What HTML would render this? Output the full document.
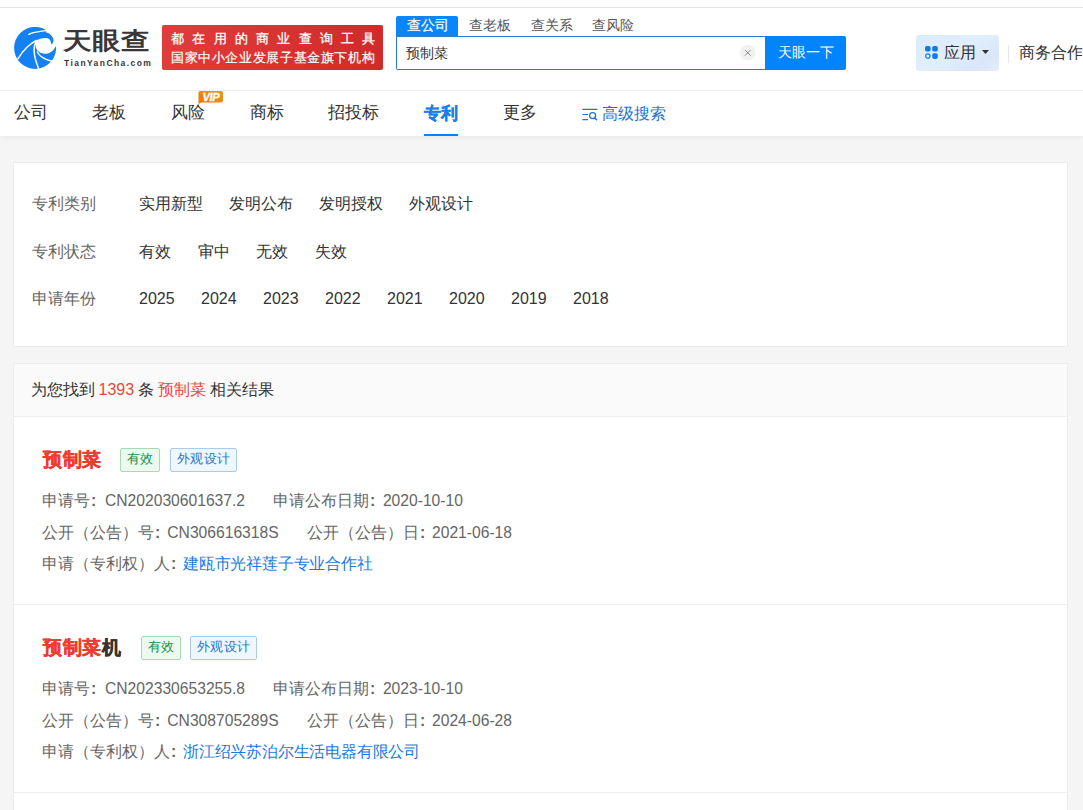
<!DOCTYPE html>
<html><head><meta charset="utf-8">
<style>
*{margin:0;padding:0;box-sizing:border-box}
html,body{text-spacing-trim:space-all;width:1083px;height:810px;overflow:hidden;background:#f5f5f5;font-family:"Liberation Sans",sans-serif;color:#333}
.abs{position:absolute;white-space:nowrap}
#top{position:absolute;left:0;top:0;width:1083px;height:91px;background:#fff;border-top:7px solid #fff}
#topline{position:absolute;left:0;top:7px;width:1083px;height:1px;background:#e3e3e3}
#navline{position:absolute;left:0;top:90px;width:1083px;height:1px;background:#f2f2f2}
#nav{position:absolute;left:0;top:91px;width:1083px;height:45px;background:#fff;box-shadow:0 2px 5px rgba(0,0,0,0.05)}
.nv{position:absolute;top:0;font-size:17px;line-height:44px;color:#333}
.card{position:absolute;left:13px;width:1055px;background:#fff;border:1px solid #ececec}
.lbl{position:absolute;font-size:16px;color:#666;line-height:20px}
.opt{position:absolute;font-size:16px;color:#333;line-height:20px}
.item{position:absolute;left:0;width:1053px;height:188px;border-bottom:1px solid #eeeeee}
.ttl{position:absolute;left:29px;top:29px;font-size:19px;font-weight:bold;-webkit-text-stroke:0.35px currentColor;line-height:28px;color:#333;white-space:nowrap;letter-spacing:0.6px}
.hl{color:#ee3b30}
.tag{position:absolute;top:31px;height:24px;font-size:13px;line-height:20px;letter-spacing:0.5px;text-indent:0.5px;border-radius:2px;white-space:nowrap;text-align:center}
.tag.g{width:40px;color:#16904c;background:#ebf9ef;border:1px solid #a9d9b6}
.tag.b{width:67px;color:#2776c8;background:#eef6fe;border:1px solid #abcbeb}
.ln{position:absolute;left:28px;font-size:16px;line-height:20px;color:#666;white-space:nowrap}
.lk{color:#1a7ae0;letter-spacing:-0.2px}
.c{display:inline-block;width:16px;padding-left:1px;font-weight:bold}
.val{position:absolute;font-size:15.65px;line-height:20px;color:#666;white-space:nowrap}
</style></head><body>
<div id="top"></div>
<div id="topline"></div>

<!-- logo -->
<svg class="abs" style="left:14px;top:27px" width="42" height="42" viewBox="14 27 42 42">
  <circle cx="35.1" cy="47.9" r="21" fill="#1480f3"/>
  <path fill="#fff" d="M36.1 40.7 C40 38 45 37.5 48 38.5 C50 39.3 51.2 41.5 51.3 44.4 C53 43.5 54 41.5 53.2 38.5 C52 35 49 32.8 45.8 32.2 L46.7 30.5 L50 26 L60 26 L60 47 L55.4 46.7 C54 50 50 53.6 46.5 53.7 C43 53.9 40 53 37.6 50.7 C35.6 48.5 34.8 45 36.1 40.7 Z"/>
  <path fill="none" stroke="#fff" stroke-width="1.3" d="M28.3 34.6 C31 33 34 32.2 37.2 31.9 C41 31.3 44 30.8 47.5 30.7"/>
  <path fill="none" stroke="#fff" stroke-width="1.5" d="M17.5 59.5 C20 55 24 50 27 47.2 C30 44.3 33 42 36.8 40.2"/>
  <path fill="none" stroke="#fff" stroke-width="1.5" d="M35.9 41.5 C34.3 45 33.8 50 34.4 54 C35 59 36.8 64 38.8 69"/>
  <path fill="none" stroke="#fff" stroke-width="1.5" d="M37 51.5 C39 55 42 57.5 45 58.8 C47 59.8 49 60.5 52 61.2"/>
</svg>
<div class="abs" style="left:63px;top:25px;font-size:29px;font-weight:bold;color:#3a3637;line-height:38px;letter-spacing:0.2px;transform:scaleY(0.84);transform-origin:0 0">天眼查</div>
<div class="abs" style="left:64px;top:57px;font-size:8.5px;font-weight:bold;color:#3a3637;line-height:12px;letter-spacing:1.42px">TianYanCha.com</div>

<!-- red banner -->
<div class="abs" style="left:162px;top:25px;width:221px;height:45px;border-radius:2px;background:linear-gradient(90deg,#e23b3b,#d02a2a)"></div>
<div class="abs" style="left:171px;top:30px;font-size:13px;line-height:18px;color:#fff;letter-spacing:8.25px;font-weight:500;-webkit-text-stroke:0.3px #fff">都在用的商业查询工具</div>
<div class="abs" style="left:171px;top:49px;font-size:13px;line-height:18px;color:#fff;letter-spacing:0.62px;font-weight:500;-webkit-text-stroke:0.2px #fff">国家中小企业发展子基金旗下机构</div>

<!-- search -->
<div class="abs" style="left:396px;top:16px;width:62px;height:21px;background:#0786fd;border-radius:2px 2px 0 0"></div>
<div class="abs" style="left:407px;top:15px;font-size:14px;line-height:20px;color:#fff;-webkit-text-stroke:0.2px #fff">查公司</div>
<div class="abs" style="left:469px;top:15px;font-size:14px;line-height:20px;color:#555">查老板</div>
<div class="abs" style="left:531px;top:15px;font-size:14px;line-height:20px;color:#555">查关系</div>
<div class="abs" style="left:592px;top:15px;font-size:14px;line-height:20px;color:#555">查风险</div>
<div class="abs" style="left:396px;top:36px;width:370px;height:34px;border:1px solid #2b79c9;border-right:none;border-radius:0 0 0 2px;background:#fff"></div>
<div class="abs" style="left:406px;top:43px;font-size:14px;line-height:20px;color:#333">预制菜</div>
<svg class="abs" style="left:739px;top:44px" width="18" height="18" viewBox="739 44 18 18"><circle cx="747.8" cy="52.8" r="7.8" fill="#f1f1f1"/><path d="M745 50 L750.6 55.6 M750.6 50 L745 55.6" stroke="#8c8c8c" stroke-width="1"/></svg>
<div class="abs" style="left:765px;top:36px;width:81px;height:34px;background:#0084ff;border-radius:0 2px 2px 0;color:#fff;font-size:14px;line-height:32px;text-align:center">天眼一下</div>

<!-- app button -->
<div class="abs" style="left:916px;top:35px;width:83px;height:36px;border-radius:3px;background:linear-gradient(150deg,#dbeafd 0%,#e1eefd 50%,#d9e6f8 78%,#e4eefb 100%)"></div>
<svg class="abs" style="left:925px;top:46px" width="13" height="13" viewBox="0 0 13 13">
  <rect x="0" y="0" width="5.6" height="5.6" rx="1.8" fill="#0a7cf0"/>
  <rect x="7.2" y="0" width="5.6" height="5.6" rx="1.8" fill="#0a7cf0"/>
  <circle cx="2.8" cy="10.1" r="2.2" fill="none" stroke="#0a7cf0" stroke-width="1.2"/>
  <rect x="7.2" y="7.3" width="5.6" height="5.6" rx="1.8" fill="#0a7cf0"/>
</svg>
<div class="abs" style="left:944px;top:43px;font-size:16px;line-height:20px;color:#333">应用</div>
<svg class="abs" style="left:981.5px;top:50px" width="7" height="4" viewBox="0 0 7 4"><path d="M0 0 L7 0 L3.5 4 Z" fill="#333"/></svg>
<div class="abs" style="left:1008px;top:45px;width:1px;height:18px;background:#e6e6e6"></div>
<div class="abs" style="left:1019px;top:43px;font-size:16px;line-height:20px;color:#333">商务合作</div>

<div id="navline"></div>
<div id="nav">
  <div class="nv" style="left:14px">公司</div>
  <div class="nv" style="left:92px">老板</div>
  <div class="nv" style="left:171px">风险</div>
  <div class="nv" style="left:250px">商标</div>
  <div class="nv" style="left:328px">招投标</div>
  <div class="nv" style="left:424px;color:#1a7fe6;font-weight:bold;-webkit-text-stroke:0.35px #1a7fe6;top:0.5px">专利</div>
  <div class="abs" style="left:424px;top:43px;width:34px;height:2px;background:#0084ff"></div>
  <div class="nv" style="left:503px">更多</div>
  <svg class="abs" style="left:578px;top:13px" width="24" height="20" viewBox="578 104 24 20">
    <path d="M582.8 109.3 H596.9" stroke="#1f74d0" stroke-width="1.3" stroke-linecap="round"/>
    <path d="M582.8 114.5 H587.4" stroke="#1f74d0" stroke-width="1.2" stroke-linecap="round"/>
    <path d="M582.8 119.6 H587.6" stroke="#1f74d0" stroke-width="1.3" stroke-linecap="round"/>
    <circle cx="592.6" cy="115.6" r="3" fill="none" stroke="#1f74d0" stroke-width="1.3"/>
    <path d="M594.9 118 L596.7 119.8" stroke="#1f74d0" stroke-width="1.4" stroke-linecap="round"/>
  </svg>
  <div class="nv" style="left:602px;color:#1e72d0;font-size:16px;top:0.5px">高级搜索</div>
</div>
<!-- VIP badge -->
<svg class="abs" style="left:197px;top:90px" width="28" height="15" viewBox="197 90 28 15">
  <defs><linearGradient id="vg" x1="0" y1="1" x2="1" y2="0"><stop offset="0" stop-color="#f07408"/><stop offset="1" stop-color="#e89a28"/></linearGradient></defs>
  <path d="M200.5 91 H221 Q223 91 223 93 V100.6 Q223 102.6 221 102.6 H201.5 L198.6 103.9 L198.4 93 Q198.4 91 200.5 91 Z" fill="url(#vg)"/>
  <text x="211" y="100.6" text-anchor="middle" font-family="Liberation Sans" font-size="11" font-weight="bold" font-style="italic" fill="#fff" stroke="#fff" stroke-width="0.3" letter-spacing="-0.3">VIP</text>
</svg>

<!-- filter card -->
<div class="card" style="top:162px;height:185px">
  <div class="lbl" style="left:18px;top:31px">专利类别</div>
  <div class="opt" style="left:125px;top:31px">实用新型</div>
  <div class="opt" style="left:215px;top:31px">发明公布</div>
  <div class="opt" style="left:305px;top:31px">发明授权</div>
  <div class="opt" style="left:395px;top:31px">外观设计</div>

  <div class="lbl" style="left:18px;top:79px">专利状态</div>
  <div class="opt" style="left:125px;top:79px">有效</div>
  <div class="opt" style="left:184px;top:79px">审中</div>
  <div class="opt" style="left:242px;top:79px">无效</div>
  <div class="opt" style="left:301px;top:79px">失效</div>

  <div class="lbl" style="left:18px;top:126px">申请年份</div>
  <div class="opt" style="left:125px;top:126px">2025</div>
  <div class="opt" style="left:187px;top:126px">2024</div>
  <div class="opt" style="left:249px;top:126px">2023</div>
  <div class="opt" style="left:311px;top:126px">2022</div>
  <div class="opt" style="left:373px;top:126px">2021</div>
  <div class="opt" style="left:435px;top:126px">2020</div>
  <div class="opt" style="left:497px;top:126px">2019</div>
  <div class="opt" style="left:559px;top:126px">2018</div>
</div>

<!-- results card -->
<div class="card" style="top:363px;height:460px">
  <div style="position:absolute;left:0;top:0;width:1053px;height:53px;background:#fafafa;border-bottom:1px solid #eeeeee"></div>
  <div class="abs" style="left:17px;top:16px;font-size:16px;line-height:20px;color:#333">为您找到</div><div class="abs" style="left:84.5px;top:16px;font-size:16px;line-height:20px;color:#e5493d">1393</div><div class="abs" style="left:124px;top:16px;font-size:16px;line-height:20px;color:#333">条</div><div class="abs" style="left:144px;top:16px;font-size:16px;line-height:20px;color:#e5493d">预制菜</div><div class="abs" style="left:196px;top:16px;font-size:16px;line-height:20px;color:#333">相关结果</div>

  <div class="item" style="top:53px">
    <div class="ttl"><span class="hl">预制菜</span></div>
    <div class="tag g" style="left:106px">有效</div>
    <div class="tag b" style="left:156px">外观设计</div>
    <div class="ln" style="top:74px">申请号<span class="c">:</span></div><div class="val" style="top:74px;left:91px">CN202030601637.2</div>
    <div class="ln" style="top:74px;left:259px">申请公布日期<span class="c">:</span></div><div class="val" style="top:74px;left:368.9px">2020-10-10</div>
    <div class="ln" style="top:106px">公开（公告）号<span class="c">:</span></div><div class="val" style="top:106px;left:153.3px">CN306616318S</div>
    <div class="ln" style="top:106px;left:293px">公开（公告）日<span class="c">:</span></div><div class="val" style="top:106px;left:418px">2021-06-18</div>
    <div class="ln" style="top:137px">申请（专利权）人<span class="c">:</span></div><div class="ln lk" style="top:137px;left:169px">建瓯市光祥莲子专业合作社</div>
  </div>
  <div class="item" style="top:241px">
    <div class="ttl"><span class="hl">预制菜</span>机</div>
    <div class="tag g" style="left:127px">有效</div>
    <div class="tag b" style="left:176px">外观设计</div>
    <div class="ln" style="top:74px">申请号<span class="c">:</span></div><div class="val" style="top:74px;left:91px">CN202330653255.8</div>
    <div class="ln" style="top:74px;left:259px">申请公布日期<span class="c">:</span></div><div class="val" style="top:74px;left:368.9px">2023-10-10</div>
    <div class="ln" style="top:106px">公开（公告）号<span class="c">:</span></div><div class="val" style="top:106px;left:153.3px">CN308705289S</div>
    <div class="ln" style="top:106px;left:293px">公开（公告）日<span class="c">:</span></div><div class="val" style="top:106px;left:418px">2024-06-28</div>
    <div class="ln" style="top:137px">申请（专利权）人<span class="c">:</span></div><div class="ln lk" style="top:137px;left:169px">浙江绍兴苏泊尔生活电器有限公司</div>
  </div>
</div>
</body></html>
